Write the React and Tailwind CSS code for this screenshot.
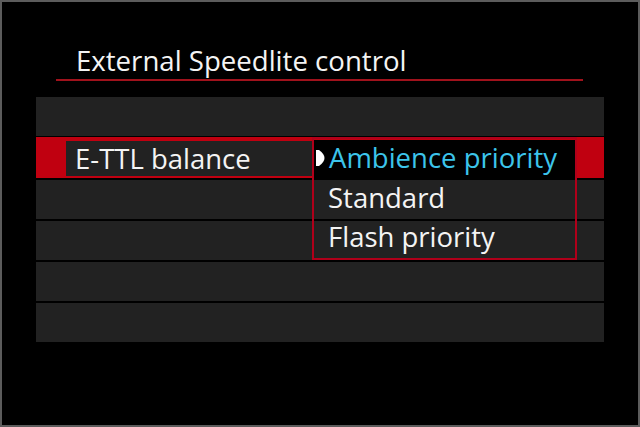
import React from "react";

const font = { fontFamily: '"Open Sans", "Noto Sans", sans-serif' };

function Cursor() {
  return (
    <svg width="9" height="16" viewBox="0 0 9 16" className="shrink-0">
      <path d="M0 0 L3 0 Q8.5 4 8.5 8 Q8.5 12 3 16 L0 16 Z" fill="#ffffff" />
    </svg>
  );
}

export default function App() {
  return (
    <div
      className="w-[640px] h-[427px] bg-black border-2 border-[#5c5c5c] flex flex-col overflow-hidden"
      style={font}
    >
      <div className="pl-[74px] pt-[40px] h-[36px] box-content text-[27.6px] leading-[36px] text-[#f4f4f4]">
        External Speedlite control
      </div>
      <div className="ml-[54px] mt-[1px] w-[527px] h-[2px] bg-[#a0121c]" />
      <div className="ml-[34px] mt-[16px] w-[568px] flex flex-col relative">
        <div className="h-[39px] bg-[#222222]" />
        <div className="h-[41px] mt-[1px] bg-[#c00010] flex items-start pl-[30px]">
          <div className="mt-[4px] w-[246px] h-[35px] bg-[#222222] flex items-center pl-[9px] text-[27.5px] text-[#f4f4f4]">
            E-TTL balance
          </div>
        </div>
        <div className="h-[39px] mt-[2px] bg-[#222222]" />
        <div className="h-[39px] mt-[2px] bg-[#222222]" />
        <div className="h-[39px] mt-[2px] bg-[#222222]" />
        <div className="h-[39px] mt-[2px] bg-[#222222]" />

        <div className="absolute left-[276px] top-[40px] w-[265px] h-[123px] border-2 border-[#b0001a] flex flex-col">
          <div className="h-[39px] mt-[1px] bg-black flex items-center gap-[4px] pl-[2px] pb-[4px] text-[27.5px] text-[#3cc4ea]">
            <Cursor />
            <span>Ambience priority</span>
          </div>
          <div className="h-[40px] flex items-center pl-[14px] pb-[2px] text-[27.5px] text-[#f4f4f4]">
            Standard
          </div>
          <div className="h-[39px] flex items-center pl-[14px] pb-[4px] text-[27.5px] text-[#f4f4f4]">
            Flash priority
          </div>
        </div>
      </div>
    </div>
  );
}
